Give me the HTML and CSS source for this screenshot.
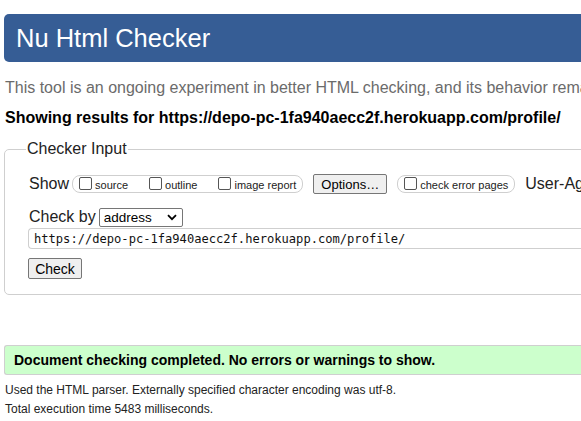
FILE: index.html
```html
<!DOCTYPE html>
<html>
<head>
<meta charset="utf-8">
<link rel="stylesheet" href="styles.css">
</head>
<body>
<div class="page">
  <h1 class="banner">Nu Html Checker</h1>
  <p class="intro">This tool is an ongoing experiment in better HTML checking, and its behavior remains subject to change</p>
  <p class="showing">Showing results for https://depo-pc-1fa940aecc2f.herokuapp.com/profile/</p>
  <fieldset class="input">
    <legend>Checker Input</legend>
    <div class="row show-row">
      <span class="lbl">Show</span>
      <span class="group">
        <label class="opt"><span class="cb"></span><span class="otext">source</span></label>
        <label class="opt"><span class="cb"></span><span class="otext">outline</span></label>
        <label class="opt"><span class="cb"></span><span class="otext">image report</span></label>
      </span>
      <button class="btn opts">Options…</button>
      <span class="group group2">
        <label class="opt"><span class="cb"></span><span class="otext">check error pages</span></label>
      </span>
      <span class="lbl ua">User-Agent</span>
    </div>
    <div class="row by-row">
      <span class="lbl">Check by</span>
      <span class="select">address<svg width="10" height="7" viewBox="0 0 10 7"><path d="M1 1.2 L5 5.2 L9 1.2" fill="none" stroke="#000" stroke-width="1.8"/></svg></span>
    </div>
    <div class="url">https://depo-pc-1fa940aecc2f.herokuapp.com/profile/</div>
    <button class="btn check">Check</button>
  </fieldset>
  <div class="success">Document checking completed. No errors or warnings to show.</div>
  <p class="meta">Used the HTML parser. Externally specified character encoding was utf-8.</p>
  <p class="meta">Total execution time 5483 milliseconds.</p>
</div>
</body>
</html>
```
FILE: styles.css
```css
html, body {
  margin: 0;
  padding: 0;
  overflow: hidden;
  background: #fff;
}
body {
  font-family: "Liberation Sans", Arial, sans-serif;
  color: #000;
}
.page {
  width: 900px;
  padding: 14px 0 0 4px;
}
.banner {
  margin: 0;
  height: 48px;
  box-sizing: border-box;
  padding: 9px 0 0 12px;
  background: #365d95;
  color: #fff;
  font-weight: normal;
  font-size: 25.5px;
  line-height: 30px;
  border-radius: 5px;
}
.intro {
  margin: 16px 0 0 1px;
  font-size: 16px;
  line-height: 20px;
  color: #6b6b6b;
  white-space: nowrap;
}
.showing {
  margin: 10px 0 0 1px;
  font-size: 16px;
  line-height: 20px;
  font-weight: bold;
  white-space: nowrap;
}
.input {
  margin: 12px 0 0 0;
  padding: 16px 0 15px 24px;
  border: 1px solid #cfcfcf;
  border-radius: 5px;
}
.input legend {
  font-size: 16px;
  padding: 0 1px;
  margin-left: -3px;
  color: #222;
}
.row {
  display: flex;
  align-items: center;
  white-space: nowrap;
}
.lbl {
  font-size: 16px;
  color: #222;
}
.show-row {
  height: 20px;
}
.group {
  display: inline-flex;
  align-items: flex-start;
  box-sizing: border-box;
  margin-left: 3px;
  height: 18px;
  border: 1px solid #cfcfcf;
  border-radius: 8px;
  padding: 0 6px 0 6px;
}
.opt {
  display: inline-flex;
  align-items: flex-start;
  margin-right: 21px;
}
.opt:last-child { margin-right: 0; }
.cb {
  display: inline-block;
  width: 11px;
  height: 11px;
  margin-top: 1px;
  border: 1px solid #555;
  border-radius: 2px;
  margin-right: 3px;
}
.otext {
  font-size: 11px;
  line-height: 13px;
  padding-top: 3px;
  color: #222;
}
.btn {
  font-family: "Liberation Sans", Arial, sans-serif;
  font-size: 13px;
  background: #efefef;
  border: 1px solid #767676;
  border-radius: 2px;
  color: #000;
  padding: 0 6px;
}
.opts {
  margin-left: 10px;
  height: 20px;
  width: 74px;
  padding: 0;
}
.group2 {
  margin-left: 10px;
  padding: 0 6px 0 6px;
}
.ua {
  margin-left: 10px;
}
.by-row {
  margin-top: 13px;
  height: 20px;
}
.select {
  display: inline-flex;
  align-items: center;
  justify-content: space-between;
  box-sizing: border-box;
  width: 84px;
  height: 19px;
  margin-left: 3px;
  padding: 0 5px 0 4px;
  border: 1px solid #767676;
  border-radius: 2px;
  font-size: 13.5px;
  color: #000;
}
.url {
  margin: 1px 0 0 -1px;
  height: 21px;
  box-sizing: border-box;
  border: 1px solid #cfcfcf;
  border-radius: 4px 0 0 4px;
  border-right: none;
  padding: 2px 0 0 5px;
  font-family: "DejaVu Sans Mono", monospace;
  font-size: 12.1px;
  line-height: 16px;
  color: #111;
}
.check {
  display: block;
  margin: 9px 0 0 -1px;
  height: 21px;
  width: 54px;
  padding: 0;
  font-size: 14px;
}
.success {
  margin: 50px 0 0 0;
  height: 30px;
  box-sizing: border-box;
  border: 1px solid #cfcfcf;
  border-right: none;
  border-radius: 3px 0 0 3px;
  background: #ccffcc;
  padding: 5px 0 0 9px;
  font-size: 14px;
  line-height: 18px;
  font-weight: bold;
}
.meta {
  margin: 8px 0 0 1px;
  font-size: 12px;
  line-height: 14px;
  color: #222;
}
.meta + .meta {
  margin-top: 5px;
}
```
